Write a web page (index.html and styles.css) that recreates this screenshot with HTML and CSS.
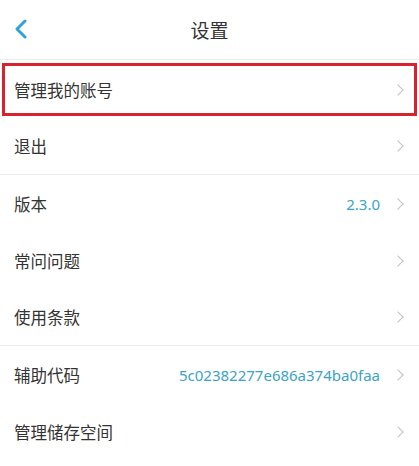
FILE: index.html
```html
<!DOCTYPE html>
<html lang="zh-CN">
<head>
    <meta charset="UTF-8">
    <meta name="viewport" content="width=device-width, initial-scale=1.0">
    <title>设置</title>
    <link rel="stylesheet" href="styles.css">
</head>
<body>
    <div class="header">
        <div class="back">
            <svg width="16" height="20" viewBox="0 0 16 20">
                <path d="M12 2 L4 10 L12 18" fill="none" stroke="#2aa5d6" stroke-width="3" stroke-linecap="round" stroke-linejoin="round"/>
            </svg>
        </div>
        <h1>设置</h1>
    </div>

    <div class="list">
        <div class="row marked">
            <span class="label">管理我的账号</span>
            <span class="arrow"></span>
        </div>
        <div class="row split">
            <span class="label">退出</span>
            <span class="arrow"></span>
        </div>
        <div class="row">
            <span class="label">版本</span>
            <span class="value">2.3.0</span>
            <span class="arrow"></span>
        </div>
        <div class="row">
            <span class="label">常问问题</span>
            <span class="arrow"></span>
        </div>
        <div class="row split">
            <span class="label">使用条款</span>
            <span class="arrow"></span>
        </div>
        <div class="row">
            <span class="label">辅助代码</span>
            <span class="value">5c02382277e686a374ba0faa</span>
            <span class="arrow"></span>
        </div>
        <div class="row">
            <span class="label">管理储存空间</span>
            <span class="arrow"></span>
        </div>
    </div>
</body>
</html>
```

FILE: styles.css
```css
* {
    margin: 0;
    padding: 0;
    box-sizing: border-box;
    font-family: "Noto Sans CJK SC", "Noto Sans", sans-serif;
}

body {
    background-color: #fff;
    color: #333;
}

.header {
    height: 60px;
    border-bottom: 1px solid #ececec;
    display: flex;
    align-items: center;
    justify-content: center;
    position: relative;
}

.header h1 {
    font-size: 19px;
    font-weight: normal;
    color: #333;
}

.back {
    position: absolute;
    left: 13px;
    top: 19px;
    display: flex;
}

.list {
    margin-top: 1px;
}

.row {
    height: 57px;
    display: flex;
    align-items: center;
    padding: 0 17px 0 14px;
}

.row.split {
    border-bottom: 1px solid #ececec;
}

.row.marked {
    outline: 3px solid #d8232f;
    outline-offset: -5px;
}

.label {
    font-size: 16.5px;
    color: #333;
    flex: 1;
}

.value {
    font-family: "Noto Sans", sans-serif;
    font-size: 15px;
    color: #3aa3c6;
    margin-right: 14px;
}

.arrow {
    width: 8px;
    height: 8px;
    border-top: 1.5px solid #c2c2c2;
    border-right: 1.5px solid #c2c2c2;
    transform: rotate(45deg);
}
```
